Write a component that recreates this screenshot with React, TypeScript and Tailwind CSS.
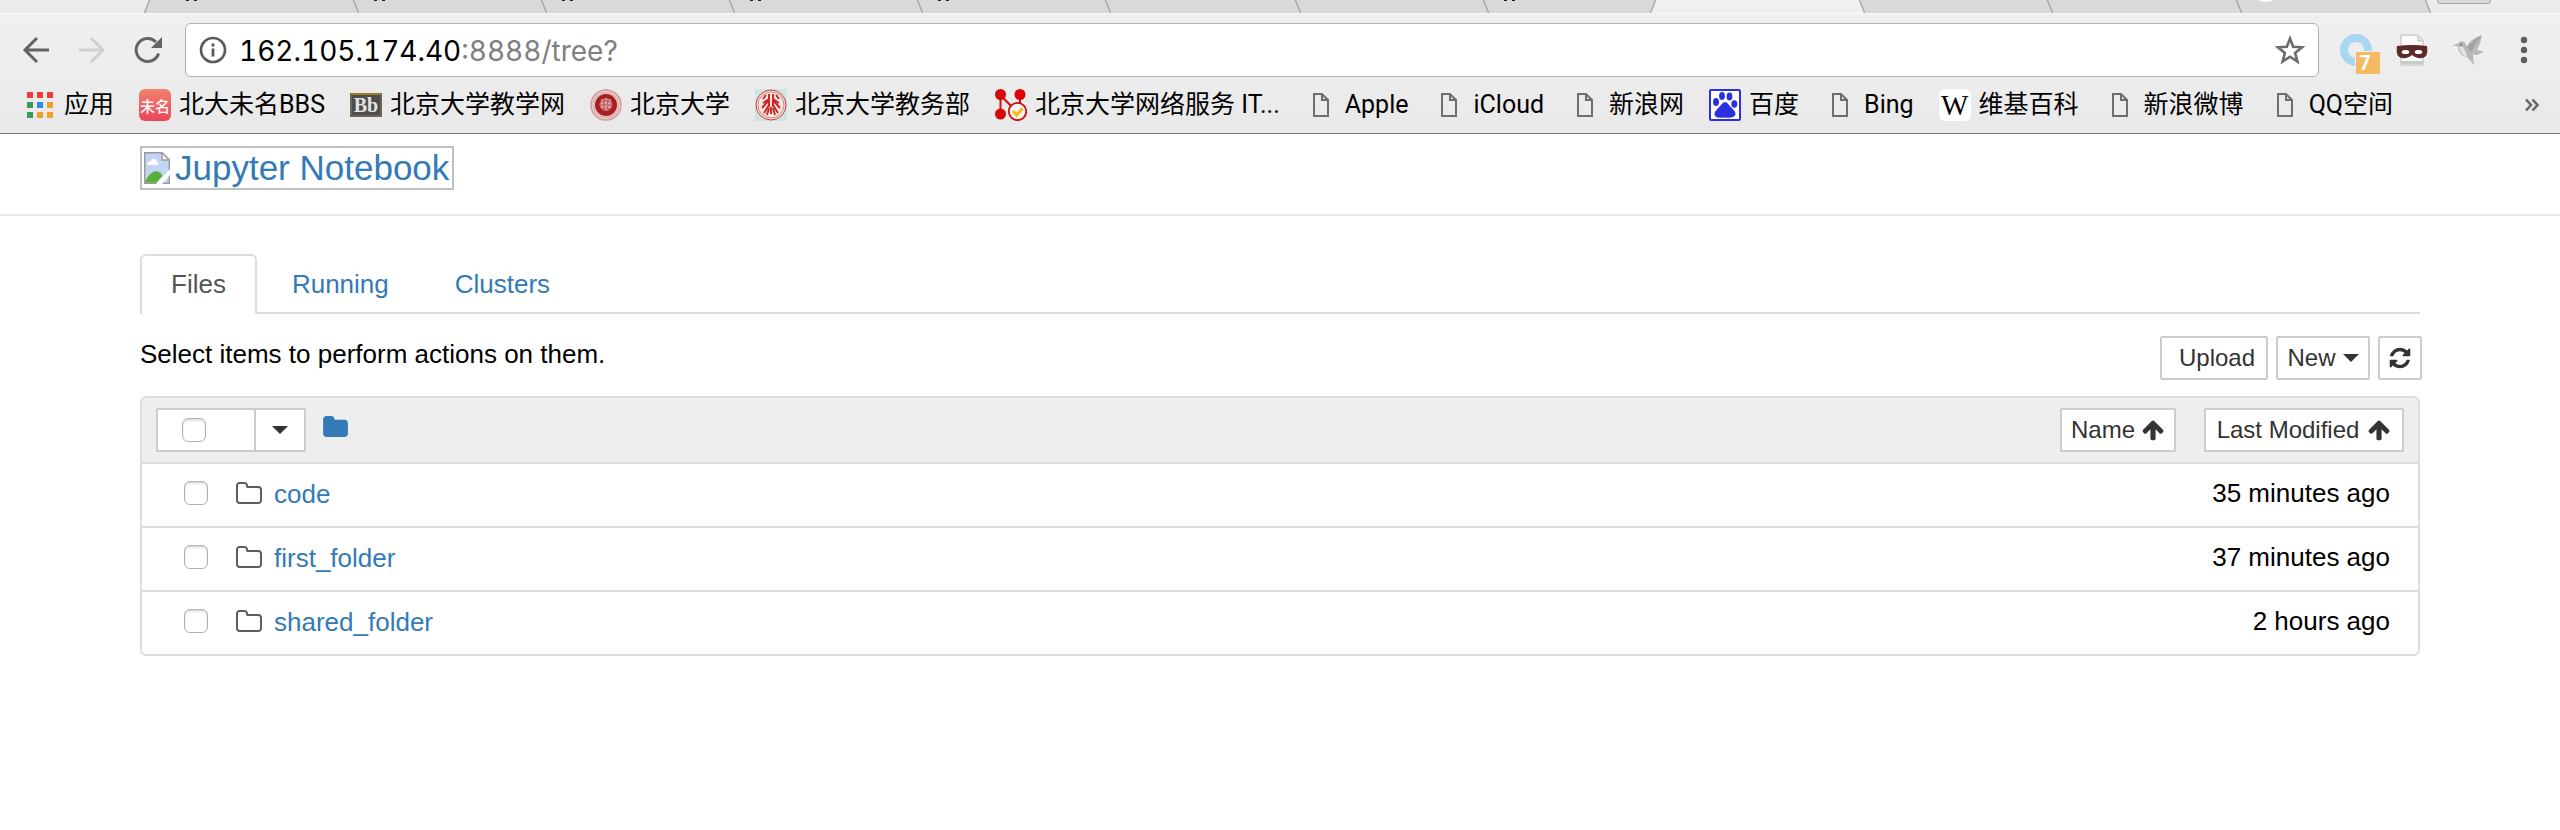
import type { ReactNode } from "react";

const PATHS = {
  folder:
    "M1664 608v704q0 92-66 158t-158 66h-1216q-92 0-158-66t-66-158v-960q0-92 66-158t158-66h320q92 0 158 66t66 158v32h672q92 0 158 66t66 158z",
  folderOpenLine:
    "M1536 1312v-704q0-40-28-68t-68-28h-704q-40 0-68-28t-28-68v-64q0-40-28-68t-68-28h-320q-40 0-68 28t-28 68v960q0 40 28 68t68 28h1216q40 0 68-28t28-68zm128-704v704q0 92-66 158t-158 66h-1216q-92 0-158-66t-66-158v-960q0-92 66-158t158-66h320q92 0 158 66t66 158v32h672q92 0 158 66t66 158z",
  refresh:
    "M1639 1056q0 5-1 7-64 268-268 434.5t-478 166.5q-146 0-282.5-55t-243.5-157l-129 129q-19 19-45 19t-45-19-19-45v-448q0-26 19-45t45-19h448q26 0 45 19t19 45-19 45l-137 137q71 66 161 102t187 36q134 0 250-65t186-179q11-17 53-117 8-23 30-23h192q13 0 22.5 9.5t9.5 22.5zm25-800v448q0 26-19 45t-45 19h-448q-26 0-45-19t-19-45 19-45l138-138q-148-137-349-137-134 0-250 65t-186 179q-11 17-53 117-8 23-30 23h-199q-13 0-22.5-9.5t-9.5-22.5v-7q65-268 270-434.5t480-166.5q146 0 284 55.5t245 156.5l130-129q19-19 45-19t45 19 19 45z",
  arrowUp:
    "M1675 971q0 51-37 90l-75 75q-38 38-91 38-54 0-90-38l-294-293v704q0 52-37.5 84.5t-90.5 32.5h-128q-53 0-90.5-32.5t-37.5-84.5v-704l-294 293q-36 38-90 38t-90-38l-75-75q-38-38-38-90 0-53 38-91l651-651q35-37 90-37 54 0 91 37l651 651q37 39 37 91z",
};

/* ---------- Browser tab strip ---------- */

type Slant = "rise" | "fall";

function TabEdge({ slant, left, right }: { slant: Slant; left: string; right: string }) {
  const rise = slant === "rise";
  return (
    <svg className="h-[13px] w-1.5 shrink-0" viewBox="0 0 6 13" aria-hidden="true">
      <rect width="6" height="13" fill={left} />
      <path d={rise ? "M6 0L0 13H6Z" : "M0 0L6 13V0Z"} fill={right} />
      <path d={rise ? "M5.6 0L.4 13" : "M.4 0L5.6 13"} stroke="#a3a3a3" strokeWidth="1.3" />
    </svg>
  );
}

function TitleMark() {
  return (
    <svg className="h-[2px] w-[14px]" viewBox="0 0 14 2" aria-hidden="true">
      <path d="M1 0h3v1H1zM9 0h3v1H9z" fill="#222" />
    </svg>
  );
}

const BACK = "#d9d9d9";
const FRAME = "#ebebeb";
const FRONT = "#f0f0f0";

const browserTabs: { width: string; mark: "none" | "title" | "round"; slant: Slant; next: string; active?: boolean }[] = [
  { width: "w-[203px]", mark: "title", slant: "fall", next: BACK },
  { width: "w-[182px]", mark: "title", slant: "fall", next: BACK },
  { width: "w-[182px]", mark: "title", slant: "fall", next: BACK },
  { width: "w-[182px]", mark: "title", slant: "fall", next: BACK },
  { width: "w-[182px]", mark: "title", slant: "fall", next: BACK },
  { width: "w-[184px]", mark: "none", slant: "fall", next: BACK },
  { width: "w-[182px]", mark: "none", slant: "fall", next: BACK },
  { width: "w-[161px]", mark: "title", slant: "rise", next: FRONT },
  { width: "w-[203px]", mark: "none", slant: "fall", next: BACK, active: true },
  { width: "w-[182px]", mark: "none", slant: "fall", next: BACK },
  { width: "w-[183px]", mark: "none", slant: "fall", next: BACK },
  { width: "w-[183px]", mark: "round", slant: "fall", next: FRAME },
];

function TabStrip() {
  return (
    <div className="flex h-[13px] items-start overflow-hidden bg-[#ebebeb]">
      <div className="w-36 shrink-0" />
      <TabEdge slant="rise" left={FRAME} right={BACK} />
      {browserTabs.map((t, i) => (
        <div key={i} className="flex shrink-0">
          <div className={`flex h-[13px] items-start ${t.width} ${t.active ? "bg-[#f0f0f0]" : "bg-[#d9d9d9]"} ${i === 0 ? "pl-[35px]" : "pl-[14px]"}`}>
            {t.mark === "title" && <TitleMark />}
            {t.mark === "round" && (
              <svg className="h-[3px] w-5" viewBox="0 0 20 3" aria-hidden="true">
                <path d="M2 0q8 4 16 0z" fill="#fff" />
              </svg>
            )}
          </div>
          <TabEdge slant={t.slant} left={t.active ? FRONT : BACK} right={t.next} />
        </div>
      ))}
      <div className="ml-1.5 h-1 w-[54px] shrink-0 rounded-b border border-t-0 border-[#a3a3a3] bg-[#dadada]" />
    </div>
  );
}

/* ---------- Address bar ---------- */

function IconButton({ label, children }: { label: string; children: ReactNode }) {
  return (
    <button type="button" aria-label={label} className="flex size-8 shrink-0 items-center justify-center">
      {children}
    </button>
  );
}

function AddressRow() {
  return (
    <div className="flex items-center px-5 pt-[9px]">
      <div className="flex w-[165px] shrink-0 items-center gap-6">
        <IconButton label="Back">
          <svg className="size-8" viewBox="0 0 32 32" fill="none" stroke="#636363" strokeWidth="3">
            <path d="M29 16H5M17 4L5 16l12 12" />
          </svg>
        </IconButton>
        <IconButton label="Forward">
          <svg className="size-8" viewBox="0 0 32 32" fill="none" stroke="#d0d0d0" strokeWidth="3">
            <path d="M3 16h24M15 4l12 12-12 12" />
          </svg>
        </IconButton>
        <IconButton label="Reload">
          <svg className="size-8" viewBox="0 0 32 32" fill="none">
            <path d="M26.6 19.5A11.5 11.5 0 1 1 24 8" stroke="#636363" strokeWidth="3" />
            <path d="M30 3v11H19z" fill="#636363" />
          </svg>
        </IconButton>
      </div>
      <div className="flex h-[54px] min-w-0 flex-1 items-center rounded-md border border-[#b2b2b2] bg-white pr-3 pl-[13px]">
        <svg className="size-7 shrink-0" viewBox="0 0 28 28" aria-hidden="true">
          <circle cx="14" cy="14" r="12" fill="none" stroke="#5a5a5a" strokeWidth="2.6" />
          <path d="M12.6 7.6h2.8v2.8h-2.8zM12.6 12.4h2.8v8h-2.8z" fill="#5a5a5a" />
        </svg>
        <a href="#tree" aria-label="Page address" className="ml-3 flex-1 pt-0.5 font-[Inter,sans-serif] text-[28px] leading-8 text-[#808080] tabular-nums">
          <span className="text-black">162.105.174.40</span>:8888/tree?
        </a>
        <IconButton label="Bookmark this page">
          <svg className="size-8" viewBox="0 0 32 32" fill="none" stroke="#6b6b6b" strokeWidth="2.6">
            <path d="M16 4.5l3.2 8.3 8.8.5-6.9 5.6 2.3 8.7L16 22.7l-7.4 4.9 2.3-8.7L4 13.3l8.800-.5z" />
          </svg>
        </IconButton>
      </div>
      <div className="flex w-[221px] shrink-0 items-center gap-6 pl-[21px]">
        <button type="button" aria-label="Downloads, 7 new" className="relative size-8">
          <svg className="size-8" viewBox="0 0 32 32">
            <circle cx="16" cy="16" r="12" fill="none" stroke="#a9d6f0" strokeWidth="8" />
          </svg>
          <span className="absolute top-[17px] left-[15px] flex h-6 w-[26px] items-center justify-center rounded-xs border border-[#efefef] bg-[#f5b863] pr-1.5 font-[Roboto,sans-serif] text-xl leading-none font-bold text-white">
            7
          </span>
        </button>
        <button type="button" aria-label="Private reader" className="size-8">
          <svg className="size-8" viewBox="0 0 32 32">
            <path d="M5 1h17l5 5v25H5z" fill="#fafafa" stroke="#b9b9b9" />
            <path d="M22 1v6h5" fill="#e8e8e8" stroke="#b9b9b9" />
            <path d="M5 27h22v3H5z" fill="#c5cbc5" />
            <path d="M1 12q15-2 30 0 1 6-1 10-3 3-8 2-4-1-6-3-2 2-6 3-5 1-8-2-2-4-1-10z" fill="#5c2b29" />
            <ellipse cx="9.500" cy="18" rx="3.800" ry="2" fill="#fff" />
            <ellipse cx="22.500" cy="18" rx="3.800" ry="2" fill="#fff" />
          </svg>
        </button>
        <button type="button" aria-label="Hummingbird" className="size-8">
          <svg className="size-8" viewBox="0 0 32 32">
            <path d="M0 11.500l6-2q3-4 7-1l2 4Q18 5 30 1q-1 8-5 15l7 1.500-7 3.500-4-.5q0 5 1.500 11l-7-8Q6 21 6 12.500z" fill="#b8b8b8" />
            <path d="M15 13Q20 7 29 2q-6 8-10 16z" fill="#a2a2a2" />
            <path d="M7 13q2 8 8 10-1-6-4-10z" fill="#e2e2e2" />
            <circle cx="9" cy="10.500" r="1" fill="#666" />
          </svg>
        </button>
        <button type="button" aria-label="Menu" className="flex size-8 justify-center">
          <svg className="h-8 w-6" viewBox="0 0 24 32" fill="#5f5f5f">
            <circle cx="12" cy="6" r="3.200" />
            <circle cx="12" cy="16" r="3.200" />
            <circle cx="12" cy="26" r="3.200" />
          </svg>
        </button>
      </div>
    </div>
  );
}

/* ---------- Bookmarks bar ---------- */

function AppsIcon() {
  const colors = ["#f23b3b", "#f23b3b", "#f23b3b", "#3a9a58", "#2a8df0", "#eda02a", "#3a9a58", "#eda02a", "#eda02a"];
  return (
    <svg className="h-[26px] w-[27px] shrink-0" viewBox="0 0 27 26" aria-hidden="true">
      {colors.map((c, i) => (
        <rect key={i} x={(i % 3) * 10} y={Math.floor(i / 3) * 10} width="6" height="6" fill={c} />
      ))}
    </svg>
  );
}

function PageIcon() {
  return (
    <svg className="size-8 shrink-0" viewBox="0 0 32 32" fill="none" stroke="#6e6e6e" strokeWidth="2" aria-hidden="true">
      <path d="M9 5h8l6 6v16H9zM17 5v6H23" />
    </svg>
  );
}

function BbsIcon() {
  return (
    <span aria-hidden="true" className="flex size-8 shrink-0 items-center justify-center rounded-md bg-linear-to-b from-[#f0806c] to-[#ea4459] font-['Noto_Sans_CJK_SC',sans-serif] text-[15px] leading-none font-medium text-white">
      未名
    </span>
  );
}

function BlackboardIcon() {
  return (
    <span aria-hidden="true" className="flex h-6 w-8 shrink-0 items-center justify-center border-2 border-[#6b6552] border-t-[#9c7a26] bg-[#4e4e4e] font-['Liberation_Serif',serif] text-xl leading-none font-bold text-[#e4e4e4]">
      Bb
    </span>
  );
}

function SealIcon() {
  return (
    <svg className="size-8 shrink-0" viewBox="0 0 32 32" fill="none" aria-hidden="true">
      <circle cx="16" cy="16" r="15" fill="#e8d3d3" stroke="#d29a9a" strokeWidth="1.500" />
      <circle cx="16" cy="16" r="12.500" stroke="#dcb0b0" strokeWidth="1.500" />
      <circle cx="16" cy="16" r="11" fill="#a81e22" />
      <circle cx="16" cy="15.500" r="6.500" fill="#c5666a" />
      <path d="M12 10v10M16 9v13M20 10v10M11 14h10M11 18h10" stroke="#e9c4c4" strokeDasharray="2 1.500" />
    </svg>
  );
}

function CrestIcon() {
  return (
    <svg className="size-8 shrink-0" viewBox="0 0 32 32" fill="none" aria-hidden="true">
      <rect width="32" height="32" fill="#cfe3e3" />
      <circle cx="16" cy="16" r="15" fill="#f0e6e4" stroke="#cf3a36" />
      <circle cx="16" cy="16" r="13" stroke="#d86a66" strokeWidth=".8" />
      <path d="M14 5v5l-6 4M18 5v5l6 4M14 11l-7 8M18 11l7 8M14 16l-5 8M18 16l5 8M14 6v12M18 6v12M16 18v7M14 19l-2 7M18 19l2 7M11 6l-3 4M21 6l3 4" stroke="#d0231f" strokeWidth="1.900" />
    </svg>
  );
}

function NetworkIcon() {
  return (
    <svg className="size-8 shrink-0" viewBox="0 0 32 32" fill="none" aria-hidden="true">
      <path d="M5.500 6v18M5.500 6L16 17M25 6v10" stroke="#dc0a0a" strokeWidth="2" />
      <circle cx="5.500" cy="5.500" r="5.500" fill="#d40808" />
      <circle cx="25" cy="5.500" r="5.500" fill="#e00000" />
      <circle cx="5.500" cy="25" r="5.500" fill="#d40808" />
      <circle cx="22.500" cy="22.500" r="8.700" fill="#f5f5f5" stroke="#cf0a12" strokeWidth="1.800" />
      <path d="M18 22l3.500 4 6-6.500" stroke="#fbbc12" strokeWidth="3.200" />
    </svg>
  );
}

function PawIcon() {
  return (
    <svg className="size-8 shrink-0" viewBox="0 0 32 32" aria-hidden="true">
      <rect x="1" y="1" width="30" height="30" rx="1" fill="#fff" stroke="#2a32e0" strokeWidth="2" />
      <g fill="#2a32e0">
        <ellipse cx="7" cy="13" rx="3" ry="4" />
        <ellipse cx="13" cy="7" rx="2.900" ry="4" />
        <ellipse cx="20.500" cy="7.500" rx="2.900" ry="3.900" />
        <ellipse cx="25.300" cy="15" rx="3" ry="3.700" />
        <path d="M16 13q2 0 4 3l5.500 6q2 3 0 5-2 2.500-9.500 1.500-7.500 1-9.500-1-2-2.500 0-5.500l5.500-6q2-3 4-3z" />
      </g>
    </svg>
  );
}

function WikiIcon() {
  return (
    <span aria-hidden="true" className="flex size-8 shrink-0 items-center justify-center rounded-md bg-white font-['Liberation_Serif',serif] text-[29px] leading-none text-black">
      W
    </span>
  );
}

const bookmarks: { label: string; icon: ReactNode }[] = [
  { label: "北大未名BBS", icon: <BbsIcon /> },
  { label: "北京大学教学网", icon: <BlackboardIcon /> },
  { label: "北京大学", icon: <SealIcon /> },
  { label: "北京大学教务部", icon: <CrestIcon /> },
  { label: "北京大学网络服务 IT...", icon: <NetworkIcon /> },
  { label: "Apple", icon: <PageIcon /> },
  { label: "iCloud", icon: <PageIcon /> },
  { label: "新浪网", icon: <PageIcon /> },
  { label: "百度", icon: <PawIcon /> },
  { label: "Bing", icon: <PageIcon /> },
  { label: "维基百科", icon: <WikiIcon /> },
  { label: "新浪微博", icon: <PageIcon /> },
  { label: "QQ空间", icon: <PageIcon /> },
];

function BookmarksBar() {
  return (
    <nav aria-label="Bookmarks" className="flex h-14 items-center gap-[25px] pr-5 pl-[27px] font-[Roboto,'Noto_Sans_CJK_SC',sans-serif] text-[25px] leading-8 whitespace-nowrap text-black">
      <a href="#apps" className="flex shrink-0 items-center gap-[10px]">
        <AppsIcon />
        应用
      </a>
      {bookmarks.map((b) => (
        <a key={b.label} href="#bookmark" className="flex shrink-0 items-center gap-2">
          {b.icon}
          {b.label}
        </a>
      ))}
      <button type="button" aria-label="More bookmarks" className="ml-auto shrink-0">
        <svg className="h-4 w-4" viewBox="0 0 16 16" fill="none" stroke="#666" strokeWidth="2.600">
          <path d="M2 2.500L7 8l-5 5.500M8.500 2.500l5 5.500-5 5.500" />
        </svg>
      </button>
    </nav>
  );
}

/* ---------- Notebook page ---------- */

function Caret() {
  return (
    <svg className="h-2 w-4 shrink-0" viewBox="0 0 16 8" fill="#333" aria-hidden="true">
      <path d="M0 0h16L8 8z" />
    </svg>
  );
}

function Glyph({ path }: { path: string }) {
  return (
    <svg className="size-6 shrink-0" viewBox="0 0 1792 1792" fill="#333" aria-hidden="true">
      <path d={path} />
    </svg>
  );
}

function ToolButton({ className, label, children }: { className: string; label?: string; children: ReactNode }) {
  return (
    <button
      type="button"
      aria-label={label}
      className={`flex h-11 items-center justify-center rounded-xs border-2 border-[#ccc] bg-white text-2xl leading-8 whitespace-nowrap text-[#333] ${className}`}
    >
      {children}
    </button>
  );
}

function TickBox({ label }: { label: string }) {
  return (
    <input
      type="checkbox"
      aria-label={label}
      className="size-6 shrink-0 appearance-none rounded-md border border-[#b0b0b0] bg-white shadow-[inset_0_2px_2px_#e0e0e0]"
    />
  );
}

const files = [
  { name: "code", modified: "35 minutes ago" },
  { name: "first_folder", modified: "37 minutes ago" },
  { name: "shared_folder", modified: "2 hours ago" },
];

const pageTabs = [
  { label: "Files", active: true },
  { label: "Running", active: false },
  { label: "Clusters", active: false },
];

function BrokenImage() {
  return (
    <svg className="h-8 w-[26px] shrink-0" viewBox="0 0 26 32" aria-hidden="true">
      <path d="M.7.7H18l7.300 7.300v23.300H.7z" fill="#c3d5f4" stroke="#9a9a9a" strokeWidth="1.400" />
      <path d="M3 12q1-3 4-3 1-3 4-2 2 1 2 3 2 1 1 3H3z" fill="#fff" />
      <path d="M1.400 30.600V29q4-9 11-10 5 1 6 5l-6 6.600z" fill="#5aae3a" />
      <path d="M12 32L26 17v6L18 32z" fill="#fff" />
      <path d="M18 .7V8h7.300z" fill="#fff" stroke="#9a9a9a" strokeWidth="1.400" />
    </svg>
  );
}

function NotebookPage() {
  return (
    <main className="font-['Liberation_Sans',Arial,sans-serif] text-[26px] leading-9 text-black">
      <header className="flex h-[82px] items-start border-b-2 border-[#e7e7e7] px-[140px] pt-3">
        <a href="#home" className="flex h-11 items-center gap-1 border-2 border-[#c0c0c0] px-[2px] text-[35px] leading-10 text-[#337ab7]">
          <BrokenImage />
          <span className="px-px">Jupyter Notebook</span>
        </a>
      </header>
      <div className="px-[140px] pt-[38px]">
        <ul className="flex h-[60px] items-start gap-1 border-b-2 border-[#ddd]">
          {pageTabs.map((t) => (
            <li key={t.label}>
              <a
                href="#tab"
                className={`flex h-[60px] items-center rounded-t-md border-2 border-b-0 px-[29px] pb-0.5 ${
                  t.active ? "border-[#ddd] bg-white text-[#555]" : "border-transparent text-[#337ab7]"
                }`}
              >
                {t.label}
              </a>
            </li>
          ))}
        </ul>
        <div className="-mr-0.5 mt-[22px] flex items-center justify-between">
          <p className="pb-2">Select items to perform actions on them.</p>
          <div className="flex gap-2">
            <ToolButton className="w-[108px] pl-1.5">Upload</ToolButton>
            <ToolButton className="w-[94px] gap-[7px]">
              New
              <Caret />
            </ToolButton>
            <ToolButton className="w-11" label="Refresh">
              <Glyph path={PATHS.refresh} />
            </ToolButton>
          </div>
        </div>
        <div className="mt-4 overflow-hidden rounded-md border-2 border-[#ddd]">
          <table className="w-full border-separate border-spacing-0">
            <thead>
              <tr className="bg-[#eee]">
                <th className="h-[66px] border-b-2 border-[#ddd] pl-[14px] text-left font-normal">
                  <div className="flex items-center gap-[17px]">
                    <div className="flex h-11 w-[150px] rounded-xs border-2 border-[#ccc] bg-white">
                      <div className="flex flex-1 items-center border-r-2 border-[#ccc] pl-6">
                        <TickBox label="Select all" />
                      </div>
                      <button type="button" aria-label="Select menu" className="flex w-12 items-center justify-center">
                        <Caret />
                      </button>
                    </div>
                    <a href="#root" aria-label="Root folder" className="pb-2">
                      <svg className="h-[21px] w-[25px]" viewBox="0 128 1664 1408" fill="#337ab7">
                        <path d={PATHS.folder} />
                      </svg>
                    </a>
                  </div>
                </th>
                <th className="h-[66px] border-b-2 border-[#ddd] pr-[14px] font-normal">
                  <div className="flex justify-end gap-7">
                    <ToolButton className="w-[116px] gap-1.5">
                      Name
                      <Glyph path={PATHS.arrowUp} />
                    </ToolButton>
                    <ToolButton className="w-[200px] gap-2">
                      Last Modified
                      <Glyph path={PATHS.arrowUp} />
                    </ToolButton>
                  </div>
                </th>
              </tr>
            </thead>
            <tbody>
              {files.map((f, i) => {
                const edge = i < files.length - 1 ? "h-16 border-b-2 border-[#ddd]" : "h-[62px]";
                return (
                  <tr key={f.name}>
                    <td className={`pb-1 pl-[42px] ${edge}`}>
                      <div className="flex items-center">
                        <TickBox label={`Select ${f.name}`} />
                        <svg className="mr-3 ml-7 h-[22px] w-[26px]" viewBox="0 128 1664 1408" fill="#5e5e5e" aria-hidden="true">
                          <path d={PATHS.folderOpenLine} />
                        </svg>
                        <a href="#folder" className="pt-0.5 text-[#337ab7]">
                          {f.name}
                        </a>
                      </div>
                    </td>
                    <td className={`pr-7 pb-1 text-right ${edge}`}>{f.modified}</td>
                  </tr>
                );
              })}
            </tbody>
          </table>
        </div>
      </div>
    </main>
  );
}

export default function App() {
  return (
    <div className="min-h-screen bg-white">
      <TabStrip />
      <div className="border-t border-b border-t-[#fafafa] border-b-[#777] bg-linear-to-b from-[#f0f0f0] to-[#e9e9e9]">
        <AddressRow />
        <BookmarksBar />
      </div>
      <NotebookPage />
    </div>
  );
}
